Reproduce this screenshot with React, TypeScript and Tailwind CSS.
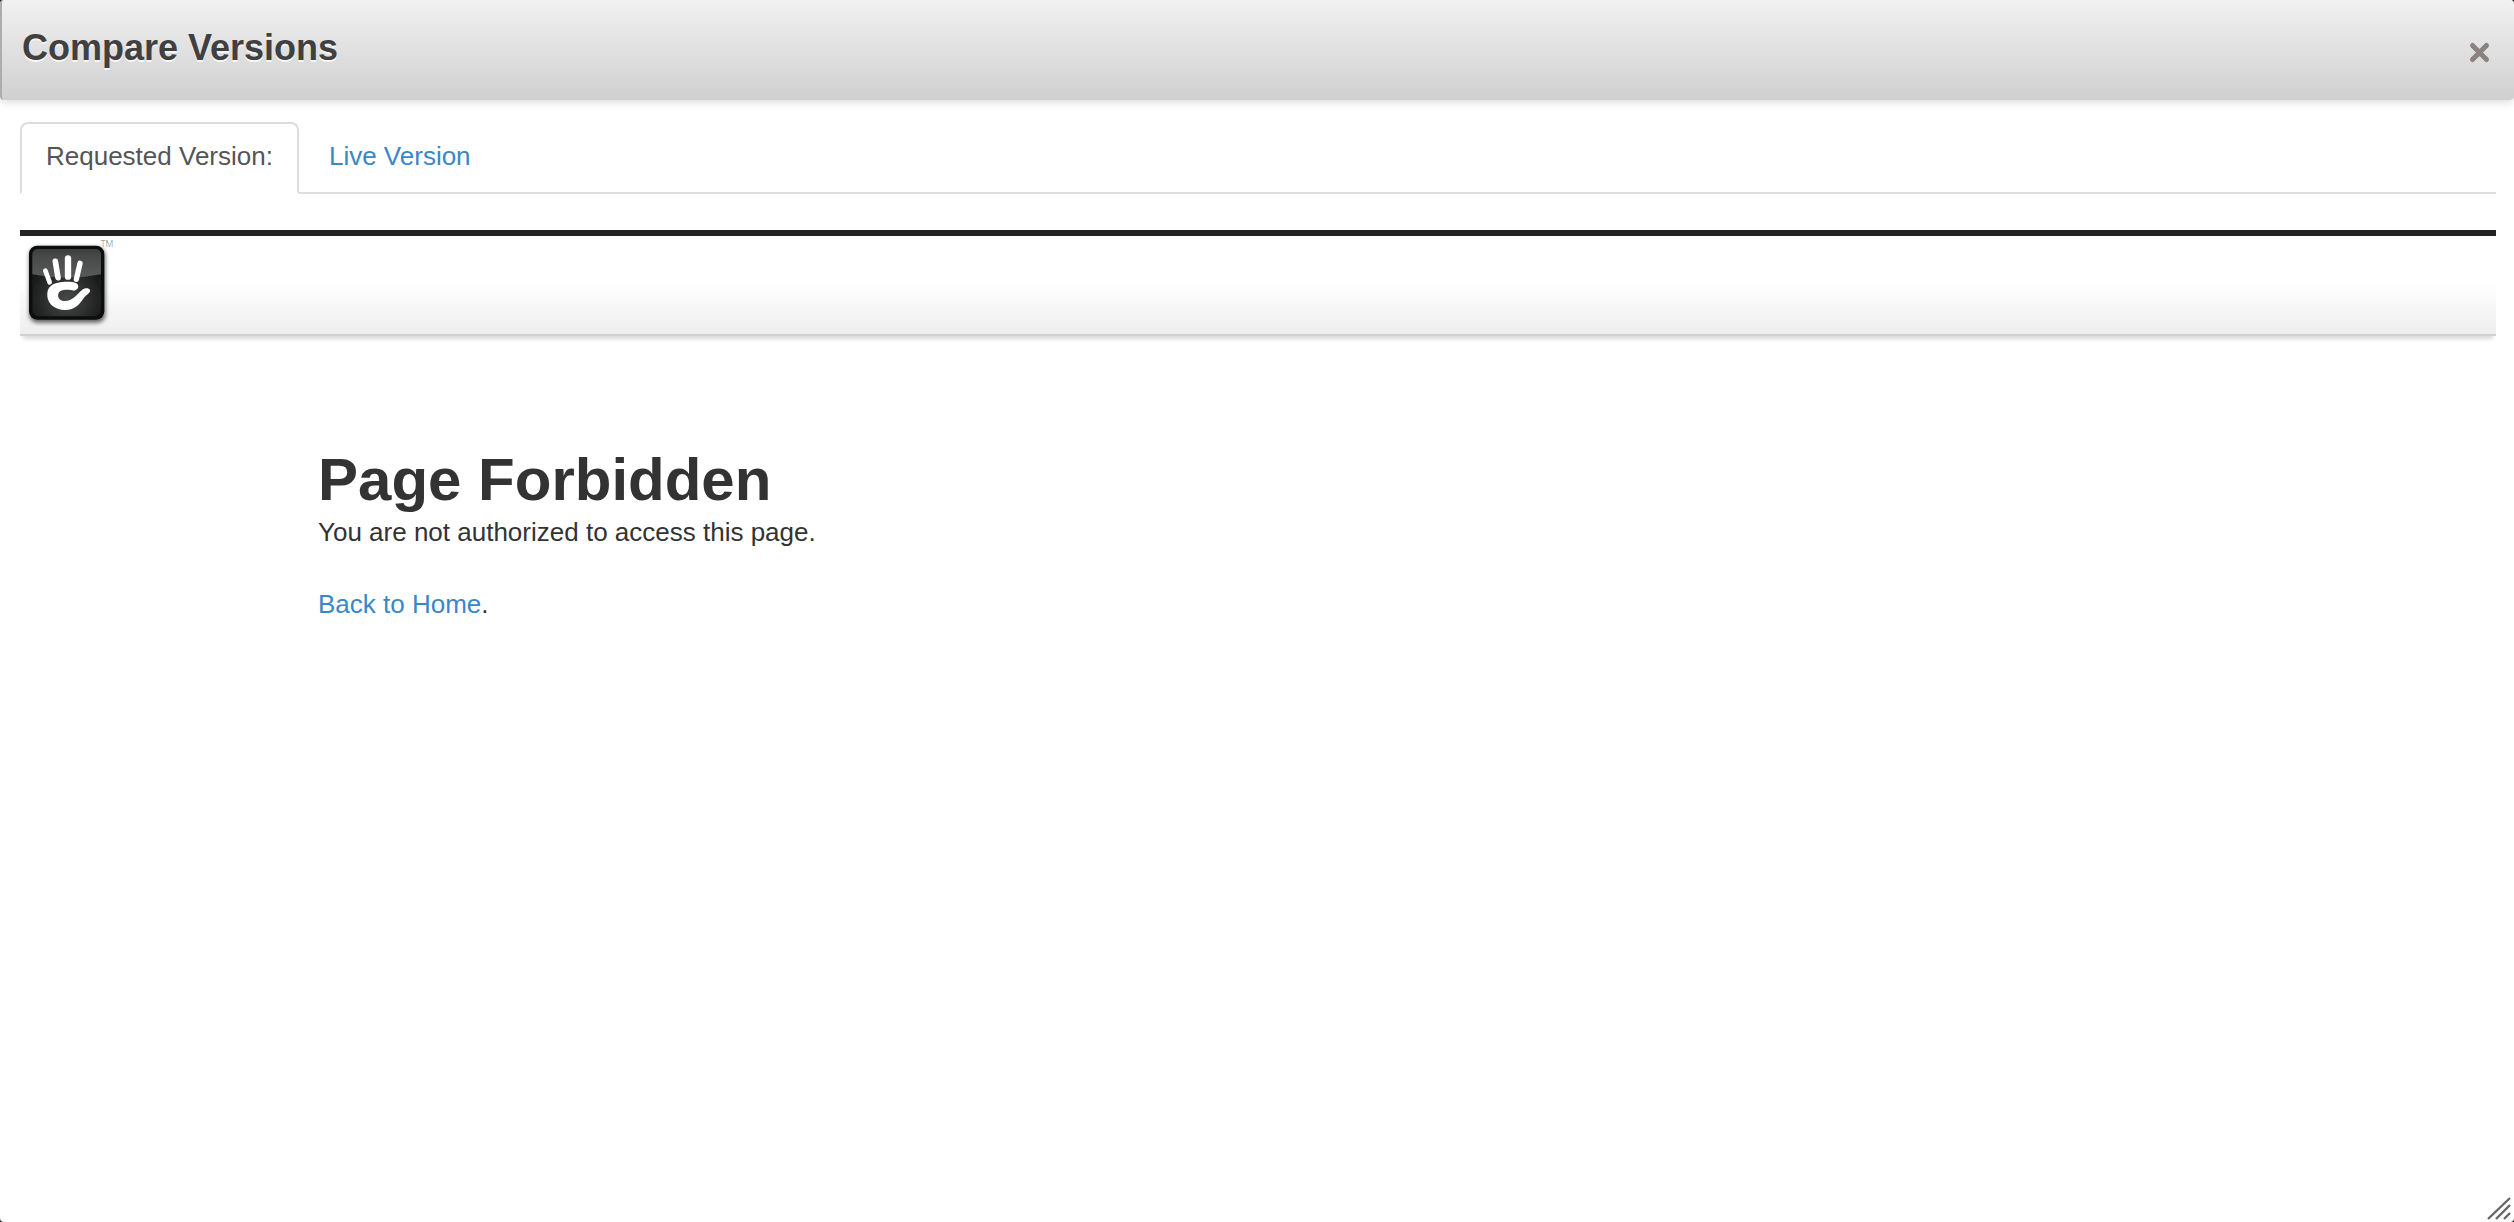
import React, { useState } from "react";

function HandLogo() {
  return (
    <svg viewBox="60 48 300 294" className="block h-[98px] w-[100px]" role="img" aria-label="Home">
      <defs>
        <linearGradient id="tileGloss" x1="0" y1="0" x2="0" y2="1">
          <stop offset="0" stopColor="#3c3d3d" />
          <stop offset="0.3" stopColor="#4a4b4b" />
          <stop offset="1" stopColor="#585959" />
        </linearGradient>
        <radialGradient id="tileGlow" cx="0.5" cy="0.75" r="0.6">
          <stop offset="0" stopColor="#484949" />
          <stop offset="1" stopColor="#161717" />
        </radialGradient>
        <filter id="tileShadow" x="-20%" y="-20%" width="140%" height="140%">
          <feGaussianBlur stdDeviation="7" />
        </filter>
        <filter id="tileEdge" x="-10%" y="-10%" width="120%" height="120%">
          <feGaussianBlur stdDeviation="2" />
        </filter>
      </defs>
      <rect x="88" y="82" width="228" height="226" rx="24" fill="#000" opacity="0.6" filter="url(#tileShadow)" />
      <rect x="87" y="77" width="226" height="222" rx="25" fill="#0c0d0d" />
      <g filter="url(#tileEdge)">
        <rect x="97" y="87" width="206" height="202" rx="18" fill="url(#tileGlow)" />
        <path d="M97 104 Q97 87 115 87 H285 Q303 87 303 104 V163 Q200 184 97 163 Z" fill="url(#tileGloss)" />
      </g>
      <g fill="none" stroke="#fff" strokeLinecap="round">
        <path d="M136 152 L149 187" strokeWidth="14" />
        <path d="M166 124 L174 173" strokeWidth="17" />
        <path d="M204 115 L204 170" strokeWidth="19" />
        <path d="M240 130 L229 178" strokeWidth="16" />
      </g>
      <path
        d="M153 197 C168 185 212 182 229 190 C240 197 234 211 222 212 C207 209 182 205 175 221 C171 236 184 244 198 243 C220 241 232 222 246 210 C254 203 267 204 270 210 C273 218 260 223 252 233 C239 252 225 270 195 270 C164 270 144 252 142 229 C141 214 144 204 153 197 Z"
        fill="#fff"
      />
      <text x="302" y="81" fontSize="27" fill="#777" fontFamily="Open Sans, sans-serif" fontWeight="300">TM</text>
    </svg>
  );
}

function CloseIcon() {
  return (
    <svg viewBox="0 0 24 24" className="block size-6" aria-hidden="true">
      <path d="M4.5 5.5 L18.5 19.5 M18.5 5.5 L4.5 19.5" stroke="#8b8181" strokeWidth="5" strokeLinecap="round" />
    </svg>
  );
}

function ResizeGrip() {
  return (
    <svg viewBox="0 0 28 28" className="absolute right-0 bottom-0 size-7" aria-hidden="true">
      <path d="M2 25 L24 4 M10 25 L24 11 M18 25 L24 19" fill="none" stroke="#666" strokeWidth="2.4" />
    </svg>
  );
}

const tabs = ["Requested Version:", "Live Version"];

export default function App() {
  const [active, setActive] = useState(0);
  return (
    <div className="min-h-screen bg-[#222]">
      <div className="relative min-h-screen rounded bg-white font-['Liberation_Sans',Arial,sans-serif] text-[26px] leading-9 text-[#333]">
        <header className="flex h-[100px] items-start justify-between rounded border-l-2 border-[#adadad] bg-linear-to-b from-[#f1f1f1] to-[#d0d0d0] pt-7 pr-5 pl-5 shadow-[0_2px_8px_rgba(0,0,0,0.15)]">
          <h1 className="text-[36px] leading-10 font-bold text-[#404040] [text-shadow:0_2px_0_#f5f5f5]">
            Compare Versions
          </h1>
          <button type="button" aria-label="Close" className="mt-3 mr-0.5">
            <CloseIcon />
          </button>
        </header>

        <div className="pt-[22px] pr-[18px] pl-5">
          <div role="tablist" className="flex gap-1 border-b-2 border-[#ddd]">
            {tabs.map((label, i) => (
              <button
                key={label}
                type="button"
                role="tab"
                aria-selected={active === i}
                onClick={() => setActive(i)}
                className={
                  active === i
                    ? "-mb-0.5 rounded-t-lg border-2 border-[#ddd] border-b-white bg-white px-6 pt-3.5 pb-4.5 text-[#555]"
                    : "-mb-0.5 rounded-t-lg border-2 border-transparent px-6 pt-3.5 pb-4.5 text-[#3a87c8]"
                }
              >
                {label}
              </button>
            ))}
          </div>

          <section role="tabpanel" className="mt-9">
            <div className="border-b-2 border-[#d2d2d2] bg-linear-to-b from-white from-50% to-[#eeeeee] shadow-[0_6px_4px_-3px_rgba(0,0,0,0.15)]">
              <div className="h-1.5 bg-[#222] shadow-[0_5px_4px_-3px_rgba(0,0,0,0.15)]" />
              <HandLogo />
            </div>
            <div className="mx-auto max-w-[1880px] pt-[110px]">
              <h2 className="text-[60px] leading-[68px] font-bold">Page Forbidden</h2>
              <p>You are not authorized to access this page.</p>
              <p className="mt-9">
                <a href="#home" className="text-[#3a87c8]">Back to Home</a>.
              </p>
            </div>
          </section>
        </div>
        <ResizeGrip />
      </div>
    </div>
  );
}
